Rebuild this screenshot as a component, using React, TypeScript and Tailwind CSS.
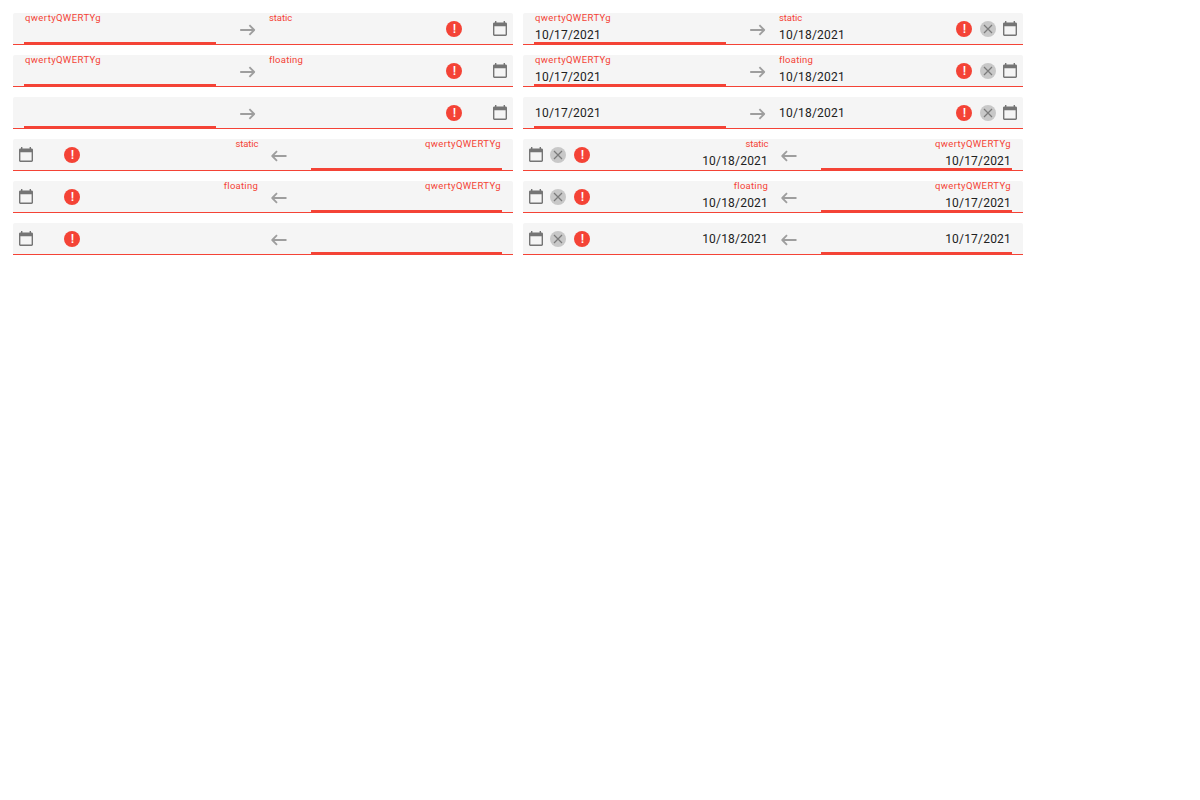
type Variant = { startLabel: string; endLabel: string; endTracking: string };

const variants: Variant[] = [
  { startLabel: "qwertyQWERTYg", endLabel: "static", endTracking: "tracking-[-0.08px]" },
  { startLabel: "qwertyQWERTYg", endLabel: "floating", endTracking: "tracking-[0.25px]" },
  { startLabel: "", endLabel: "", endTracking: "" },
];

function CalendarIcon() {
  return (
    <svg viewBox="0 0 18 18" className="mt-[7px] h-[18px] w-[18px] shrink-0 fill-[#757575]">
      <path
        fillRule="evenodd"
        d="M4 1h1.4v1.4h7.2V1H14v1.4h.6c.8 0 1.4.6 1.4 1.4v10.8c0 .8-.6 1.4-1.4 1.4H3.4C2.6 16 2 15.4 2 14.6V3.800c0-.8.6-1.4 1.4-1.4H4zM3.4 6.3v8.3h11.200V6.3z"
      />
    </svg>
  );
}

function ClearIcon() {
  return (
    <svg viewBox="0 0 16 16" className="mt-2 h-4 w-4 shrink-0">
      <circle cx="8" cy="8" r="8" fill="#c8c8c8" />
      <path d="M4 4l8 8M12 4l-8 8" stroke="#7b7b7b" strokeWidth="1.2" fill="none" />
    </svg>
  );
}

function ErrorBadge() {
  return (
    <div className="mt-2 h-4 w-4 shrink-0 rounded-full bg-[#f44336] pl-px text-center text-[13px] leading-4 font-medium text-white">
      !
    </div>
  );
}

function Arrow({ rtl }: { rtl: boolean }) {
  return (
    <svg viewBox="0 0 18 18" className="mt-2 h-[18px] w-[18px] shrink-0" fill="none" stroke="#9e9e9e" strokeWidth="1.8" strokeLinejoin="round">
      {rtl ? <path d="M16.5 9H2.2M7 4.2L2.2 9 7 13.8" /> : <path d="M1.2 9h14M10.4 4.2L15.2 9l-4.8 4.8" />}
    </svg>
  );
}

type FieldProps = { label: string; value: string; active?: boolean; rtl: boolean; tracking: string };

function Field({ label, value, active, rtl, tracking }: FieldProps) {
  const width = active ? (rtl ? "w-[191px]" : "w-48") : rtl ? "w-[179px]" : "w-[178px]";
  return (
    <div
      className={`flex h-[31px] shrink-0 flex-col ${width} ${rtl ? "text-right" : ""} ${
        active ? "border-b-2 border-[#f44336]" : ""
      }`}
    >
      {label && (
        <div
          className={`h-[10px] text-[9.5px] leading-[10px] whitespace-nowrap text-[#f44336] ${
            rtl && label === "static" ? "pr-[0.5px]" : "px-px"
          } ${tracking}`}
        >
          {label}
        </div>
      )}
      <div
        className={`h-4 px-px text-[12px] leading-4 tracking-[0.2px] text-[#212121] ${label ? "mt-1" : "mt-2"}`}
      >
        {value}
      </div>
    </div>
  );
}

function RangeBox({ variant, filled, rtl }: { variant: Variant; filled: boolean; rtl: boolean }) {
  return (
    <div
      className={`flex h-8 w-[500px] items-start overflow-hidden rounded-t-[2px] border-b border-[#f44336] bg-[#f5f5f5] ${
        rtl ? "flex-row-reverse pr-[11px] pl-1" : "pr-1 pl-[11px]"
      }`}
    >
      <Field label={variant.startLabel} value={filled ? "10/17/2021" : ""} active rtl={rtl} tracking="tracking-[0.4px]" />
      <div className={`flex w-[52px] shrink-0 ${rtl ? "justify-start pl-[11px]" : "justify-end pr-[11px]"}`}>
        <Arrow rtl={rtl} />
      </div>
      <Field label={variant.endLabel} value={filled ? "10/18/2021" : ""} rtl={rtl} tracking={variant.endTracking} />
      <div className={`flex flex-1 items-start justify-end ${rtl ? "flex-row-reverse" : ""}`}>
        <ErrorBadge />
        <div className={`flex w-[29px] shrink-0 ${rtl ? "justify-start pl-[5px]" : "justify-end pr-[5px]"}`}>
          {filled && <ClearIcon />}
        </div>
        <CalendarIcon />
      </div>
    </div>
  );
}

export default function App() {
  return (
    <div className="flex h-[800px] w-[1200px] gap-[10px] bg-white p-[13px] font-[Roboto,sans-serif]">
      {[false, true].map((filled) => (
        <div key={String(filled)} className="flex flex-col gap-[10px]">
          {[false, true].map((rtl) =>
            variants.map((variant, i) => (
              <RangeBox key={`${rtl}-${i}`} variant={variant} filled={filled} rtl={rtl} />
            )),
          )}
        </div>
      ))}
    </div>
  );
}
